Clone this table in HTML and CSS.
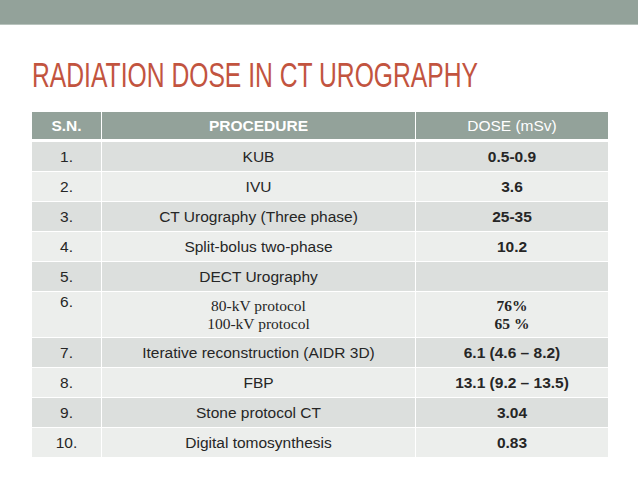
FILE: index.html
```html
<!DOCTYPE html>
<html>
<head>
<meta charset="utf-8">
<link rel="stylesheet" href="styles.css">
</head>
<body>
<div class="topbar"></div>
<h1 class="title"><span class="title-text">RADIATION DOSE IN CT UROGRAPHY</span></h1>
<table class="dose-table">
  <thead>
    <tr>
      <th class="c-sn">S.N.</th>
      <th class="c-proc">PROCEDURE</th>
      <th class="c-dose light">DOSE (mSv)</th>
    </tr>
  </thead>
  <tbody>
    <tr><td>1.</td><td>KUB</td><td class="b">0.5-0.9</td></tr>
    <tr><td>2.</td><td>IVU</td><td class="b">3.6</td></tr>
    <tr><td>3.</td><td>CT Urography (Three phase)</td><td class="b">25-35</td></tr>
    <tr><td>4.</td><td>Split-bolus two-phase</td><td class="b">10.2</td></tr>
    <tr><td>5.</td><td>DECT Urography</td><td class="b"></td></tr>
    <tr class="tall"><td class="top">6.</td><td class="serif">80-kV protocol<br>100-kV protocol</td><td class="serif b">76%<br>65 %</td></tr>
    <tr><td>7.</td><td>Iterative reconstruction (AIDR 3D)</td><td class="b">6.1 (4.6 – 8.2)</td></tr>
    <tr><td>8.</td><td>FBP</td><td class="b">13.1 (9.2 – 13.5)</td></tr>
    <tr><td>9.</td><td>Stone protocol CT</td><td class="b">3.04</td></tr>
    <tr><td>10.</td><td>Digital tomosynthesis</td><td class="b">0.83</td></tr>
  </tbody>
</table>
</body>
</html>
```
FILE: styles.css
```css
html, body {
  margin: 0;
  padding: 0;
  background: #ffffff;
}
body {
  font-family: "Liberation Sans", Arial, sans-serif;
  width: 638px;
  height: 479px;
  overflow: hidden;
}
.topbar {
  height: 25px;
  background: #93a29a;
  border-bottom: 1px solid #b8c3bd;
  box-sizing: border-box;
}
.title {
  margin: 30px 0 0 32px;
  font-weight: normal;
  font-size: 35px;
  line-height: 40px;
  height: 40px;
  color: #c2543f;
  white-space: nowrap;
}
.title-text {
  display: inline-block;
  transform: scaleX(0.705);
  transform-origin: left center;
}
.dose-table {
  margin: 17px 0 0 32px;
  width: 574px;
  border-collapse: collapse;
  table-layout: fixed;
  font-size: 15.5px;
  color: #262626;
}
.dose-table th {
  background: #93a29a;
  color: #ffffff;
  height: 27px;
  padding: 0;
  font-weight: bold;
  border-right: 1px solid #ffffff;
  border-bottom: 3px solid #ffffff;
  text-align: center;
}
.dose-table th.light { font-weight: normal; }
.c-sn { width: 69px; }
.c-proc { width: 313px; }
.c-dose { width: 192px; }
.dose-table td {
  height: 29px;
  padding: 0;
  text-align: center;
  vertical-align: middle;
  border-right: 1px solid #ffffff;
  border-bottom: 1px solid #ffffff;
  line-height: 18px;
}
.dose-table th:last-child,
.dose-table td:last-child { border-right: none; }
.dose-table tbody tr:nth-child(odd) td { background: #dcdfdd; }
.dose-table tbody tr:nth-child(even) td { background: #eceeec; }
.dose-table td.b { font-weight: bold; }
.dose-table tr.tall td { height: 44px; }
.dose-table td.top { vertical-align: top; padding-top: 1px; }
.dose-table td.serif {
  font-family: "Liberation Serif", "Times New Roman", serif;
  line-height: 17.5px;
}
```
